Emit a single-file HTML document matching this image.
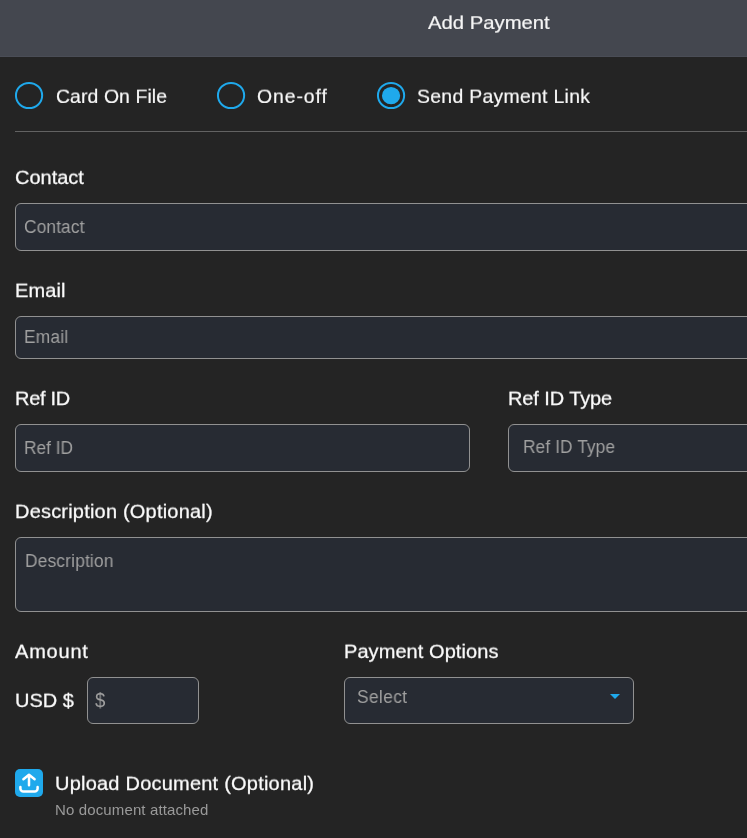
<!DOCTYPE html>
<html lang="en">
<head>
<meta charset="utf-8">
<title>Add Payment</title>
<style>
*{box-sizing:border-box;margin:0;padding:0}
html,body{width:747px;height:838px;overflow:hidden;background:#242424}
body{position:relative;font-family:"Liberation Sans",sans-serif;color:#fff}
.abs{position:absolute;white-space:nowrap;line-height:1;will-change:transform}
.hdr{position:absolute;left:0;top:0;width:747px;height:57px;background:#44474f;border-bottom:1px solid #4a4d56}
.title{left:428px;top:12px;font-size:20.3px;color:#f6f6f6;-webkit-text-stroke:0.22px #f6f6f6;transform:scaleY(0.91);transform-origin:0 83%}
.rl{top:86px;font-size:19.4px;color:#f8f8f8;-webkit-text-stroke:0.2px #f8f8f8;transform:scaleY(0.96);transform-origin:0 83%}
.hr{position:absolute;left:15px;top:131px;width:732px;height:1px;background:#626262}
.lbl{font-size:20px;color:#fafafa;-webkit-text-stroke:0.28px #fafafa;transform:scaleY(0.945);transform-origin:0 83%}
.box{position:absolute;background:#272b33;border:1px solid #919191;border-radius:6px}
.ph{font-size:18px;color:#a0a0a0;transform:scaleX(0.961);transform-origin:0 50%}
.sub{font-size:15px;color:#9a9a9a}
.icon{position:absolute;left:15px;top:769px;width:28px;height:28px;border-radius:5px;background:#1fa9ec}
.tri{position:absolute;left:610px;top:694px;width:0;height:0;border-left:5.7px solid transparent;border-right:5.7px solid transparent;border-top:5.6px solid #1fa9ec}
</style>
</head>
<body>
<div class="hdr"></div>
<div class="abs title" id="t_title">Add Payment</div>

<div class="abs rl" id="t_r1" style="left:55.9px;top:87px;letter-spacing:0.1px">Card On File</div>
<div class="abs rl" id="t_r2" style="left:257px;top:87px;letter-spacing:0.93px">One-off</div>
<div class="abs rl" id="t_r3" style="left:417.4px;top:87px;letter-spacing:0.3px">Send Payment Link</div>
<svg class="radios" width="420" height="40" viewBox="0 0 420 40" style="position:absolute;left:0;top:76px" fill="none" stroke="#1fa9ec" stroke-width="2">
<ellipse cx="29.05" cy="19.5" rx="13.1" ry="12.6"/>
<ellipse cx="231.05" cy="19.5" rx="13.1" ry="12.6"/>
<ellipse cx="391.05" cy="19.5" rx="13.1" ry="12.6"/>
<ellipse cx="391.05" cy="19.65" rx="9.1" ry="8.6" fill="#1fa9ec" stroke="none"/>
</svg>
<div class="hr"></div>

<div class="abs lbl" id="t_l1" style="left:15px;top:167px">Contact</div>
<div class="box" style="left:15px;top:203px;width:760px;height:48px"></div>
<div class="abs ph" id="t_p1" style="left:23.6px;top:218px;letter-spacing:0.13px">Contact</div>

<div class="abs lbl" id="t_l2" style="left:15.3px;top:280px;letter-spacing:0.1px">Email</div>
<div class="box" style="left:15px;top:316px;width:760px;height:43px"></div>
<div class="abs ph" id="t_p2" style="left:24.3px;top:328px;letter-spacing:0.25px">Email</div>

<div class="abs lbl" id="t_l3" style="left:15px;top:388px;letter-spacing:-0.3px">Ref ID</div>
<div class="box" style="left:15px;top:424px;width:455px;height:48px"></div>
<div class="abs ph" id="t_p3" style="left:24.3px;top:439px;letter-spacing:0px">Ref ID</div>

<div class="abs lbl" id="t_l4" style="left:508px;top:388px;letter-spacing:-0.1px">Ref ID Type</div>
<div class="box" style="left:508px;top:424px;width:260px;height:48px"></div>
<div class="abs ph" id="t_p4" style="left:523px;top:438px;letter-spacing:0.1px">Ref ID Type</div>

<div class="abs lbl" id="t_l5" style="left:15px;top:501px;letter-spacing:0.2px">Description (Optional)</div>
<div class="box" style="left:15px;top:537px;width:760px;height:75px"></div>
<div class="abs ph" id="t_p5" style="left:24.5px;top:552px;letter-spacing:0.2px">Description</div>

<div class="abs lbl" id="t_l6" style="left:15px;top:641px;letter-spacing:0.8px">Amount</div>
<div class="abs lbl" id="t_l7" style="left:15px;top:690px">USD $</div>
<div class="box" style="left:87px;top:677px;width:112px;height:47px"></div>
<div class="abs ph" id="t_p6" style="left:95.1px;top:689.5px;font-size:20.5px;transform:scaleX(0.9)">$</div>

<div class="abs lbl" id="t_l8" style="left:343.5px;top:641px;letter-spacing:0.07px">Payment Options</div>
<div class="box" style="left:344px;top:677px;width:290px;height:47px"></div>
<div class="abs ph" id="t_p7" style="left:357px;top:688px;letter-spacing:0.4px">Select</div>
<div class="tri"></div>

<div class="icon">
<svg width="28" height="28" viewBox="0 0 28 28" fill="none" stroke="#fff" stroke-width="2.5" stroke-linecap="round" stroke-linejoin="round">
<path d="M14 5.9v10.3M8.4 10.2L14 5.7l5.6 4.5"/>
<path d="M5.4 18v1.6a3 3 0 0 0 3 3h11.2a3 3 0 0 0 3-3V18"/>
</svg>
</div>
<div class="abs lbl" id="t_l9" style="left:55.4px;top:773px;letter-spacing:0.22px">Upload Document (Optional)</div>
<div class="abs sub" id="t_s1" style="left:55px;top:802px;letter-spacing:0.13px">No document attached</div>
</body>
</html>
